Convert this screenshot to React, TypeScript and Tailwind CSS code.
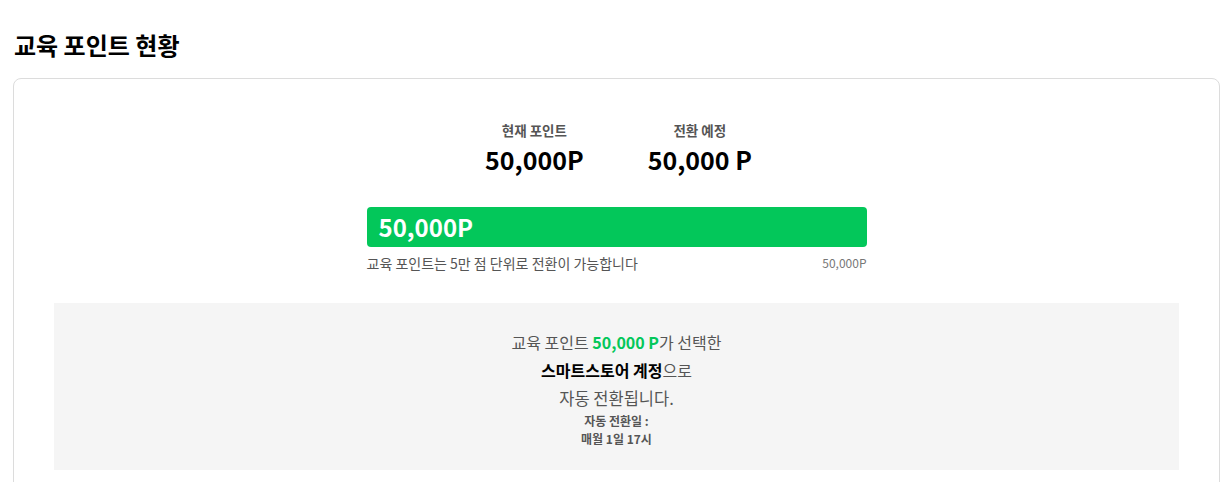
const font = {
  fontFamily: '"Noto Sans CJK KR", "Noto Sans", sans-serif',
};

const Stat = ({ label, value }: { label: string; value: string }) => (
  <div className="flex flex-col items-center">
    <span className="text-[13.5px] font-bold leading-[18px] text-[#555]">{label}</span>
    <span className="mt-[4px] text-[25px] font-bold leading-[32px] text-black">{value}</span>
  </div>
);

export default function App() {
  return (
    <div className="h-[482px] overflow-hidden bg-white pl-[13px] pr-[2px] pt-[28px]" style={font}>
      <h2 className="pl-[1px] text-[24px] font-bold leading-[34px] text-black">교육 포인트 현황</h2>

      <div className="mt-[16px] h-[420px] rounded-t-[8px] border border-[#dcdcdc] px-[40px] pt-[42px]">
        <div className="flex justify-center gap-[64px] pl-[4px]">
          <Stat label="현재 포인트" value="50,000P" />
          <Stat label="전환 예정" value="50,000 P" />
        </div>

        <div className="mx-auto mt-[32px] w-[500px]">
          <div className="flex h-[40px] items-center rounded-[4px] bg-[#03c75a] px-[12px]">
            <span className="text-[24px] font-bold leading-none text-white">50,000P</span>
          </div>
          <div className="mt-[6px] flex items-center justify-between">
            <span className="text-[14px] leading-[20px] text-[#555]">
              교육 포인트는 5만 점 단위로 전환이 가능합니다
            </span>
            <span className="text-[12px] leading-[20px] text-[#777]">50,000P</span>
          </div>
        </div>

        <div className="mt-[30px] flex h-[167px] flex-col items-center bg-[#f5f5f5] pt-[26px]">
          <p className="text-[16px] leading-[27px] text-[#555]">
            교육 포인트 <span className="font-bold text-[#03c75a]">50,000 P</span>가 선택한
          </p>
          <p className="text-[16px] leading-[28px] text-[#555]">
            <span className="font-bold text-black">스마트스토어 계정</span>으로
          </p>
          <p className="text-[16.5px] leading-[28px] text-[#555]">자동 전환됩니다.</p>
          <p className="text-[12px] font-bold leading-[18px] text-[#555]">자동 전환일 :</p>
          <p className="text-[12px] font-bold leading-[18px] text-[#555]">매월 1일 17시</p>
        </div>
      </div>
    </div>
  );
}
